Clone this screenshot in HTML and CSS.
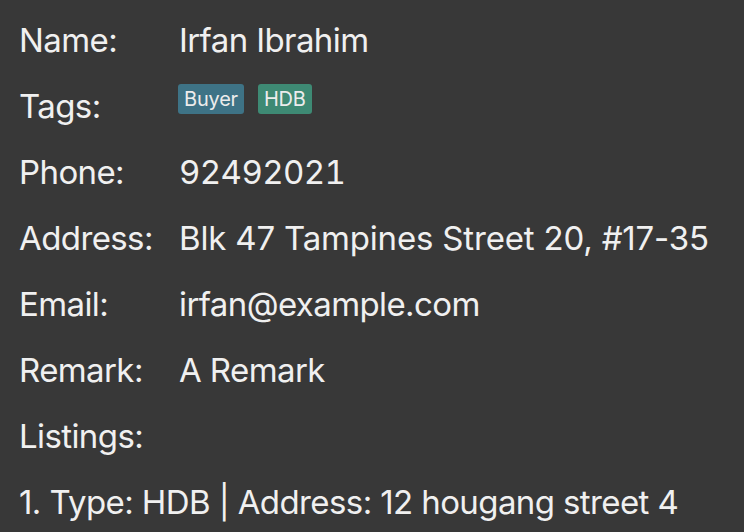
FILE: index.html
```html
<!DOCTYPE html>
<html>
<head>
<meta charset="utf-8">
<link rel="stylesheet" href="styles.css">
</head>
<body>
<div class="card">
  <div class="row"><span class="label">Name:</span><span class="value">Irfan Ibrahim</span></div>
  <div class="row"><span class="label">Tags:</span><span class="value tags"><span class="tag buyer">Buyer</span><span class="tag hdb">HDB</span></span></div>
  <div class="row"><span class="label">Phone:</span><span class="value digits">92492021</span></div>
  <div class="row"><span class="label">Address:</span><span class="value address">Blk 47 Tampines Street 20, #17-35</span></div>
  <div class="row"><span class="label">Email:</span><span class="value">irfan@example.com</span></div>
  <div class="row"><span class="label">Remark:</span><span class="value">A Remark</span></div>
  <div class="row"><span class="label">Listings:</span></div>
  <div class="row"><span class="listing">1. Type: HDB | Address: 12 hougang street 4</span></div>
</div>
</body>
</html>
```
FILE: styles.css
```css
html, body {
  margin: 0;
  padding: 0;
  background: #383838;
}
.card {
  padding: 7px 0 0 19px;
  font-family: Inter, "Noto Sans", sans-serif;
  font-size: 33px;
  color: #f0f0f0;
  letter-spacing: -0.6px;
}
.row {
  display: flex;
  align-items: center;
  height: 66px;
  white-space: nowrap;
}
.label {
  width: 160px;
  flex: none;
}
.digits {
  font-variant-numeric: tabular-nums;
}
.address {
  letter-spacing: -0.18px;
}
.tags {
  display: flex;
  gap: 14px;
  margin: 0 0 14px -1px;
}
.tag {
  font-size: 20px;
  letter-spacing: -0.2px;
  padding: 0 6px;
  height: 30px;
  line-height: 30px;
  border-radius: 3px;
  color: #ececec;
}
.buyer { background: #3e7386; }
.hdb { background: #3e8a74; }
```
